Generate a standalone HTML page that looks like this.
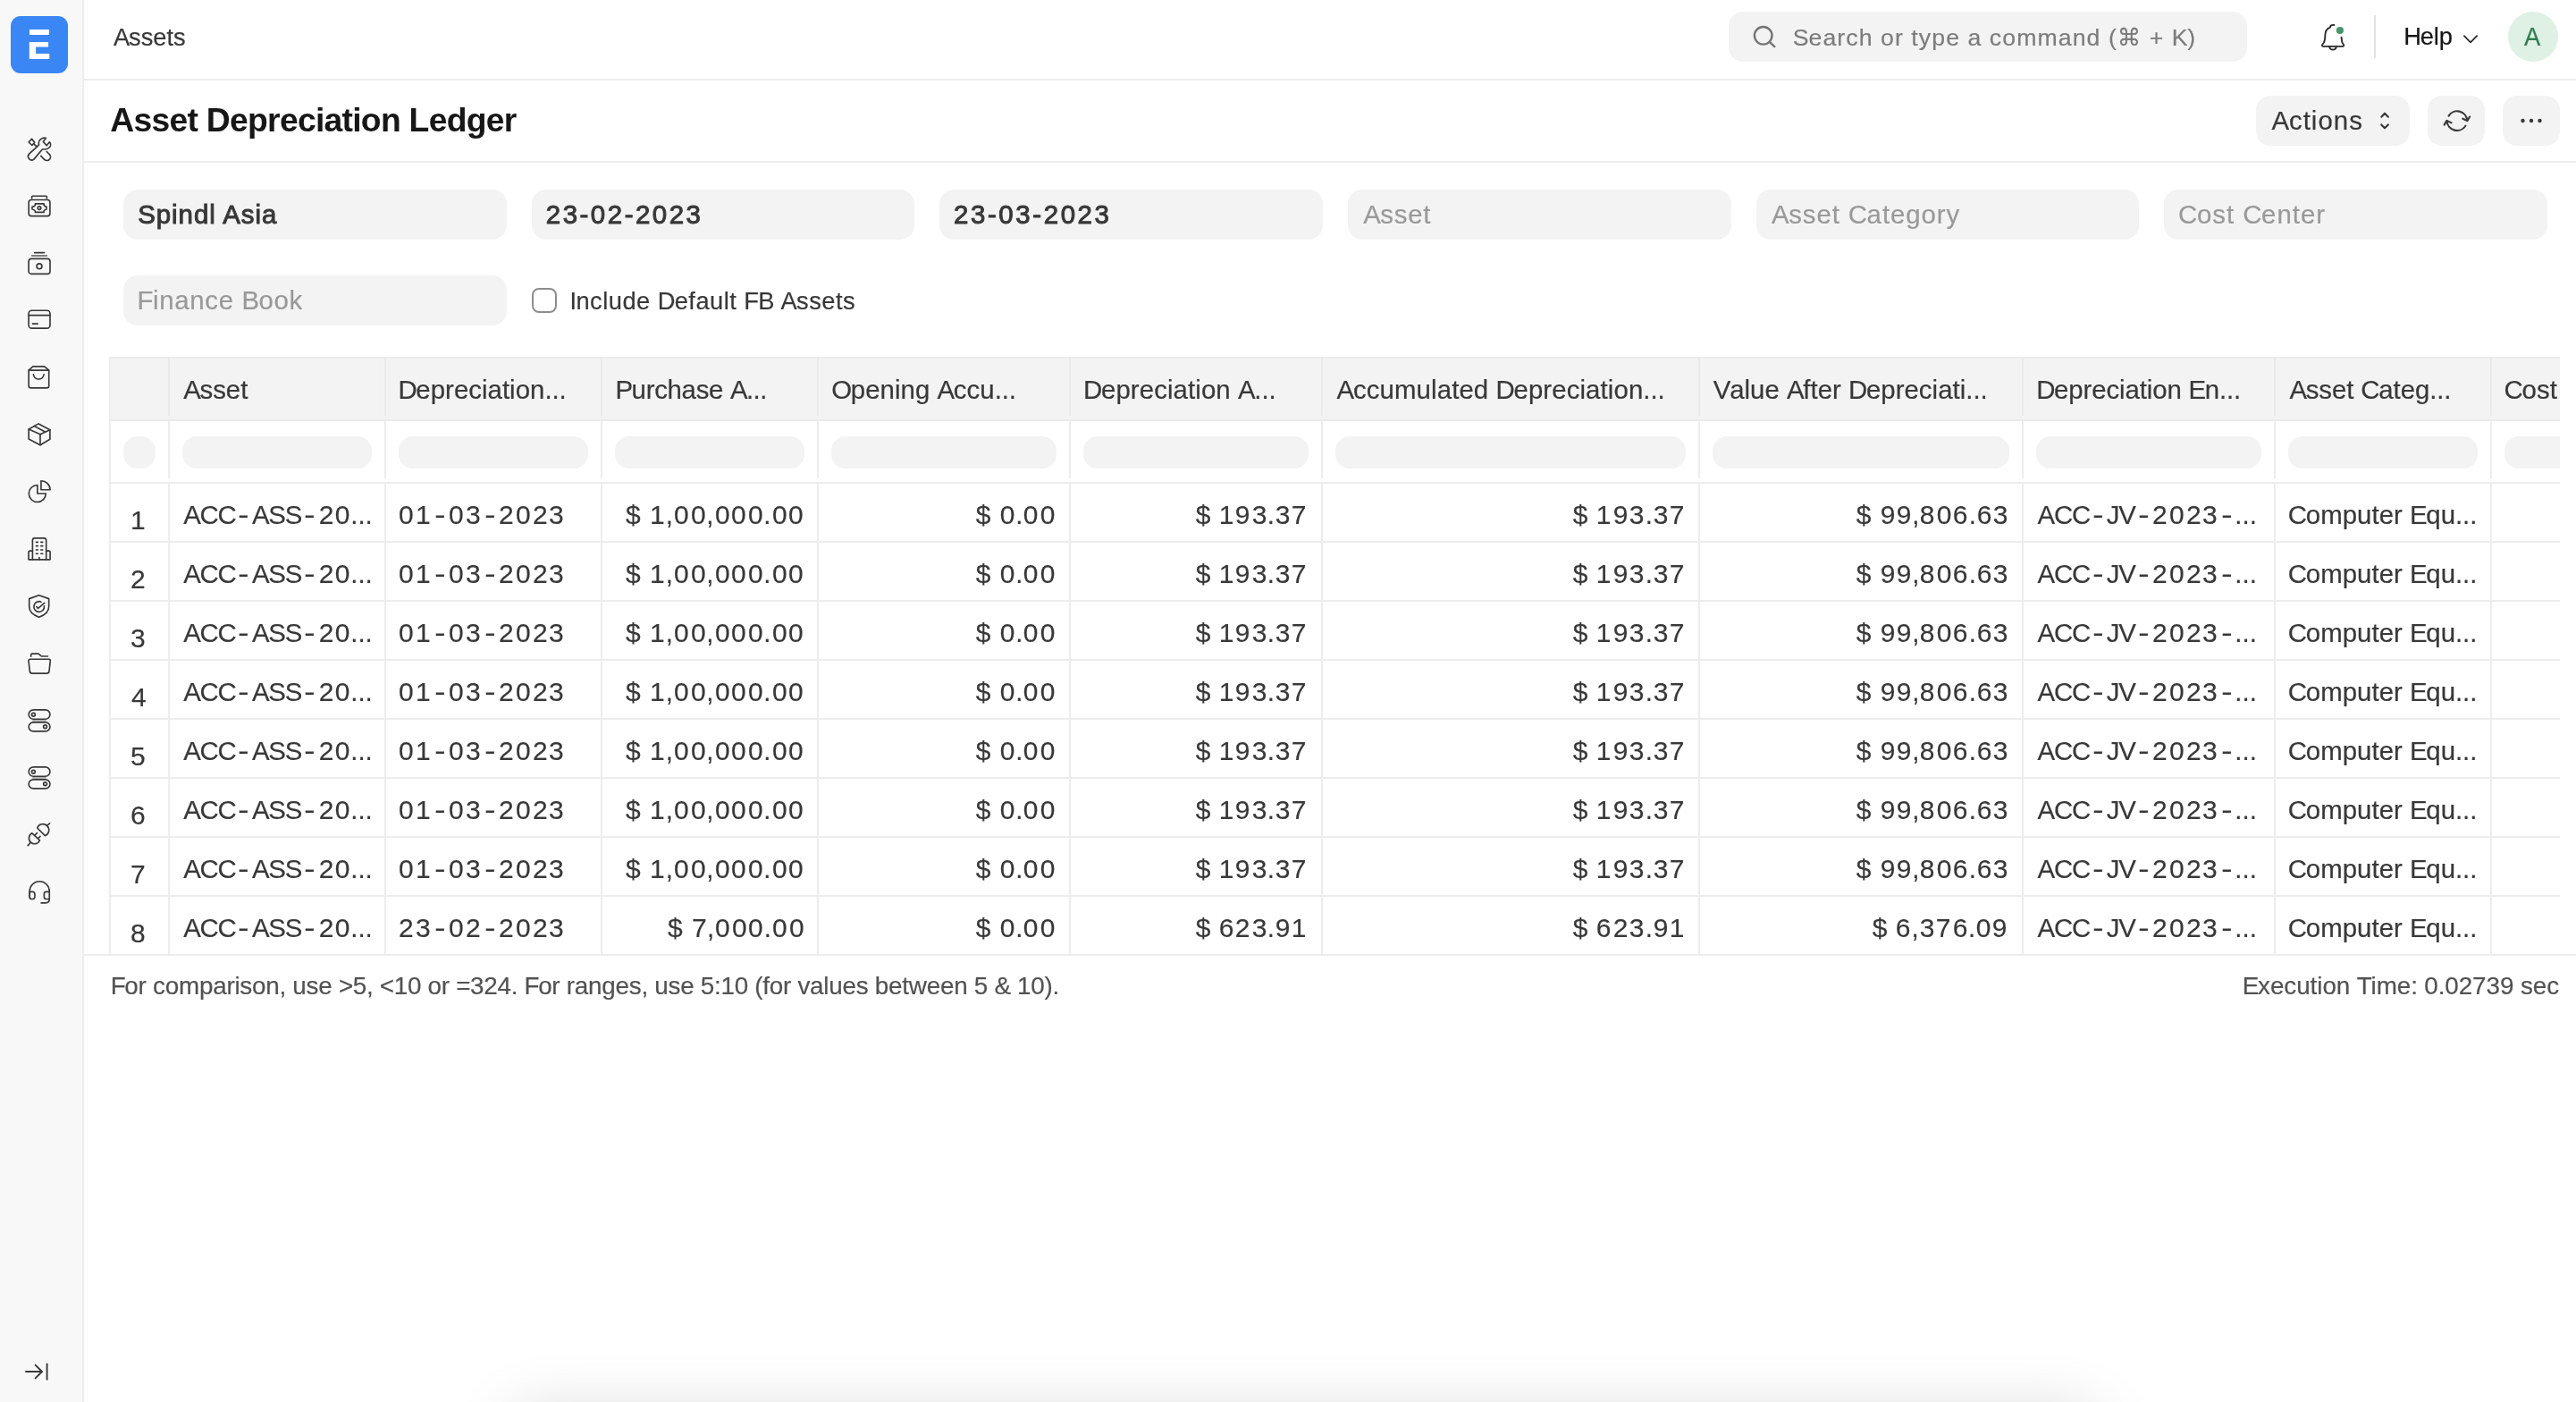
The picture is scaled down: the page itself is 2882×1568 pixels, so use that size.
<!DOCTYPE html>
<html lang="en"><head><meta charset="utf-8"><title>Asset Depreciation Ledger</title>
<style>
html,body{margin:0;padding:0;background:#fff;}
body{width:2882px;height:1568px;position:relative;overflow:hidden;font-family:"Liberation Sans", "DejaVu Sans", sans-serif;}
.b{position:absolute;}
.t{position:absolute;white-space:nowrap;line-height:1;font-kerning:normal;-webkit-text-stroke:0.2px currentColor;}
svg{position:absolute;overflow:visible;}
.t b{font-weight:inherit;display:inline-block;width:calc(.629em + var(--e));text-align:center;letter-spacing:0;transform:scaleX(1.02);}
.U{letter-spacing:calc(-.04em + var(--e));}
.l{letter-spacing:calc(.005em + var(--e));}
.p{letter-spacing:calc(.0em + var(--e));}
.s{letter-spacing:calc(.0em + var(--e));}
.t i{font-style:normal;display:inline-block;width:.634em;text-align:center;letter-spacing:0;transform:scaleX(1.25);}
</style></head><body>
<div class="b" style="left:0px;top:0px;width:92px;height:1568px;background:#f8f8f8;"></div>
<div class="b" style="left:92px;top:0px;width:2px;height:1568px;background:#ededed;"></div>
<div class="b" style="left:94px;top:88px;width:2788px;height:2px;background:#ededed;"></div>
<div class="b" style="left:94px;top:180px;width:2788px;height:2px;background:#ededed;"></div>
<div class="b" style="left:12px;top:18px;width:64px;height:64px;background:#3b86f5;border-radius:11px;"></div>
<div class="b" style="left:32.8px;top:33px;width:22.3px;height:6px;background:#fff;"></div>
<svg class="b" style="left:32px;top:46px" width="24" height="21" viewBox="32 46 24 21"><path d="M32.8 46.9H54.1V52.6H40.1V60.1H55.3V66.1H32.8Z" fill="#fff"/></svg>
<div class="b" style="left:1934px;top:13px;width:580px;height:56px;background:#f3f3f3;border-radius:16px;"></div>
<div class="b" style="left:2656px;top:17px;width:2px;height:48px;background:#e2e2e2;"></div>
<div class="b" style="left:2806px;top:13px;width:56px;height:56px;background:#dff0e4;border-radius:28px;"></div>
<div class="b" style="left:2524px;top:107px;width:172px;height:56px;background:#f3f3f3;border-radius:16px;"></div>
<div class="b" style="left:2716px;top:107px;width:64px;height:56px;background:#f3f3f3;border-radius:16px;"></div>
<div class="b" style="left:2800px;top:107px;width:64px;height:56px;background:#f3f3f3;border-radius:16px;"></div>
<div class="b" style="left:138.0px;top:212px;width:428.67px;height:56px;background:#f3f3f3;border-radius:16px;"></div>
<div class="b" style="left:594.67px;top:212px;width:428.67px;height:56px;background:#f3f3f3;border-radius:16px;"></div>
<div class="b" style="left:1051.33px;top:212px;width:428.67px;height:56px;background:#f3f3f3;border-radius:16px;"></div>
<div class="b" style="left:1508.0px;top:212px;width:428.67px;height:56px;background:#f3f3f3;border-radius:16px;"></div>
<div class="b" style="left:1964.67px;top:212px;width:428.67px;height:56px;background:#f3f3f3;border-radius:16px;"></div>
<div class="b" style="left:2421.34px;top:212px;width:428.67px;height:56px;background:#f3f3f3;border-radius:16px;"></div>
<div class="b" style="left:138px;top:308px;width:428.67px;height:56px;background:#f3f3f3;border-radius:16px;"></div>
<div class="b" style="left:595px;top:322px;width:28px;height:28px;background:#fff;border-radius:8px;box-sizing:border-box;border:2px solid #8d8d8d;"></div>
<div class="b" style="left:122px;top:399px;width:2742px;height:672px;overflow:hidden">
<div class="b" style="left:0px;top:0px;width:2760px;height:70px;background:#f3f3f3;"></div>
<div class="b" style="left:0px;top:70px;width:2760px;height:2px;background:#ebebeb;"></div>
<div class="b" style="left:0px;top:0px;width:2760px;height:2px;background:#ececec;"></div>
<div class="b" style="left:0px;top:0px;width:2px;height:670px;background:#ededed;"></div>
<div class="b" style="left:66px;top:0px;width:2px;height:66px;background:#eaeaea;"></div>
<div class="b" style="left:66px;top:72px;width:2px;height:64px;background:#ededed;"></div>
<div class="b" style="left:308px;top:0px;width:2px;height:66px;background:#eaeaea;"></div>
<div class="b" style="left:308px;top:72px;width:2px;height:64px;background:#ededed;"></div>
<div class="b" style="left:550px;top:0px;width:2px;height:66px;background:#eaeaea;"></div>
<div class="b" style="left:550px;top:72px;width:2px;height:64px;background:#ededed;"></div>
<div class="b" style="left:792px;top:0px;width:2px;height:66px;background:#eaeaea;"></div>
<div class="b" style="left:792px;top:72px;width:2px;height:64px;background:#ededed;"></div>
<div class="b" style="left:1074px;top:0px;width:2px;height:66px;background:#eaeaea;"></div>
<div class="b" style="left:1074px;top:72px;width:2px;height:64px;background:#ededed;"></div>
<div class="b" style="left:1356px;top:0px;width:2px;height:66px;background:#eaeaea;"></div>
<div class="b" style="left:1356px;top:72px;width:2px;height:64px;background:#ededed;"></div>
<div class="b" style="left:1778px;top:0px;width:2px;height:66px;background:#eaeaea;"></div>
<div class="b" style="left:1778px;top:72px;width:2px;height:64px;background:#ededed;"></div>
<div class="b" style="left:2140px;top:0px;width:2px;height:66px;background:#eaeaea;"></div>
<div class="b" style="left:2140px;top:72px;width:2px;height:64px;background:#ededed;"></div>
<div class="b" style="left:2422px;top:0px;width:2px;height:66px;background:#eaeaea;"></div>
<div class="b" style="left:2422px;top:72px;width:2px;height:64px;background:#ededed;"></div>
<div class="b" style="left:2664px;top:0px;width:2px;height:66px;background:#eaeaea;"></div>
<div class="b" style="left:2664px;top:72px;width:2px;height:64px;background:#ededed;"></div>
<div class="b" style="left:0px;top:140px;width:2760px;height:2px;background:#ededed;"></div>
<div class="b" style="left:16px;top:89px;width:36px;height:36px;background:#f3f3f3;border-radius:16px;"></div>
<div class="b" style="left:82px;top:89px;width:212px;height:36px;background:#f3f3f3;border-radius:16px;"></div>
<div class="b" style="left:324px;top:89px;width:212px;height:36px;background:#f3f3f3;border-radius:16px;"></div>
<div class="b" style="left:566px;top:89px;width:212px;height:36px;background:#f3f3f3;border-radius:16px;"></div>
<div class="b" style="left:808px;top:89px;width:252px;height:36px;background:#f3f3f3;border-radius:16px;"></div>
<div class="b" style="left:1090px;top:89px;width:252px;height:36px;background:#f3f3f3;border-radius:16px;"></div>
<div class="b" style="left:1372px;top:89px;width:392px;height:36px;background:#f3f3f3;border-radius:16px;"></div>
<div class="b" style="left:1794px;top:89px;width:332px;height:36px;background:#f3f3f3;border-radius:16px;"></div>
<div class="b" style="left:2156px;top:89px;width:252px;height:36px;background:#f3f3f3;border-radius:16px;"></div>
<div class="b" style="left:2438px;top:89px;width:212px;height:36px;background:#f3f3f3;border-radius:16px;"></div>
<div class="b" style="left:2680px;top:89px;width:212px;height:36px;background:#f3f3f3;border-radius:16px;"></div>
<div class="b" style="left:2px;top:206px;width:2760px;height:2px;background:#ededed;"></div>
<div class="b" style="left:66px;top:142px;width:2px;height:64px;background:#ededed;"></div>
<div class="b" style="left:308px;top:142px;width:2px;height:64px;background:#ededed;"></div>
<div class="b" style="left:550px;top:142px;width:2px;height:64px;background:#ededed;"></div>
<div class="b" style="left:792px;top:142px;width:2px;height:64px;background:#ededed;"></div>
<div class="b" style="left:1074px;top:142px;width:2px;height:64px;background:#ededed;"></div>
<div class="b" style="left:1356px;top:142px;width:2px;height:64px;background:#ededed;"></div>
<div class="b" style="left:1778px;top:142px;width:2px;height:64px;background:#ededed;"></div>
<div class="b" style="left:2140px;top:142px;width:2px;height:64px;background:#ededed;"></div>
<div class="b" style="left:2422px;top:142px;width:2px;height:64px;background:#ededed;"></div>
<div class="b" style="left:2664px;top:142px;width:2px;height:64px;background:#ededed;"></div>
<div class="b" style="left:2px;top:272px;width:2760px;height:2px;background:#ededed;"></div>
<div class="b" style="left:66px;top:208px;width:2px;height:64px;background:#ededed;"></div>
<div class="b" style="left:308px;top:208px;width:2px;height:64px;background:#ededed;"></div>
<div class="b" style="left:550px;top:208px;width:2px;height:64px;background:#ededed;"></div>
<div class="b" style="left:792px;top:208px;width:2px;height:64px;background:#ededed;"></div>
<div class="b" style="left:1074px;top:208px;width:2px;height:64px;background:#ededed;"></div>
<div class="b" style="left:1356px;top:208px;width:2px;height:64px;background:#ededed;"></div>
<div class="b" style="left:1778px;top:208px;width:2px;height:64px;background:#ededed;"></div>
<div class="b" style="left:2140px;top:208px;width:2px;height:64px;background:#ededed;"></div>
<div class="b" style="left:2422px;top:208px;width:2px;height:64px;background:#ededed;"></div>
<div class="b" style="left:2664px;top:208px;width:2px;height:64px;background:#ededed;"></div>
<div class="b" style="left:2px;top:338px;width:2760px;height:2px;background:#ededed;"></div>
<div class="b" style="left:66px;top:274px;width:2px;height:64px;background:#ededed;"></div>
<div class="b" style="left:308px;top:274px;width:2px;height:64px;background:#ededed;"></div>
<div class="b" style="left:550px;top:274px;width:2px;height:64px;background:#ededed;"></div>
<div class="b" style="left:792px;top:274px;width:2px;height:64px;background:#ededed;"></div>
<div class="b" style="left:1074px;top:274px;width:2px;height:64px;background:#ededed;"></div>
<div class="b" style="left:1356px;top:274px;width:2px;height:64px;background:#ededed;"></div>
<div class="b" style="left:1778px;top:274px;width:2px;height:64px;background:#ededed;"></div>
<div class="b" style="left:2140px;top:274px;width:2px;height:64px;background:#ededed;"></div>
<div class="b" style="left:2422px;top:274px;width:2px;height:64px;background:#ededed;"></div>
<div class="b" style="left:2664px;top:274px;width:2px;height:64px;background:#ededed;"></div>
<div class="b" style="left:2px;top:404px;width:2760px;height:2px;background:#ededed;"></div>
<div class="b" style="left:66px;top:340px;width:2px;height:64px;background:#ededed;"></div>
<div class="b" style="left:308px;top:340px;width:2px;height:64px;background:#ededed;"></div>
<div class="b" style="left:550px;top:340px;width:2px;height:64px;background:#ededed;"></div>
<div class="b" style="left:792px;top:340px;width:2px;height:64px;background:#ededed;"></div>
<div class="b" style="left:1074px;top:340px;width:2px;height:64px;background:#ededed;"></div>
<div class="b" style="left:1356px;top:340px;width:2px;height:64px;background:#ededed;"></div>
<div class="b" style="left:1778px;top:340px;width:2px;height:64px;background:#ededed;"></div>
<div class="b" style="left:2140px;top:340px;width:2px;height:64px;background:#ededed;"></div>
<div class="b" style="left:2422px;top:340px;width:2px;height:64px;background:#ededed;"></div>
<div class="b" style="left:2664px;top:340px;width:2px;height:64px;background:#ededed;"></div>
<div class="b" style="left:2px;top:470px;width:2760px;height:2px;background:#ededed;"></div>
<div class="b" style="left:66px;top:406px;width:2px;height:64px;background:#ededed;"></div>
<div class="b" style="left:308px;top:406px;width:2px;height:64px;background:#ededed;"></div>
<div class="b" style="left:550px;top:406px;width:2px;height:64px;background:#ededed;"></div>
<div class="b" style="left:792px;top:406px;width:2px;height:64px;background:#ededed;"></div>
<div class="b" style="left:1074px;top:406px;width:2px;height:64px;background:#ededed;"></div>
<div class="b" style="left:1356px;top:406px;width:2px;height:64px;background:#ededed;"></div>
<div class="b" style="left:1778px;top:406px;width:2px;height:64px;background:#ededed;"></div>
<div class="b" style="left:2140px;top:406px;width:2px;height:64px;background:#ededed;"></div>
<div class="b" style="left:2422px;top:406px;width:2px;height:64px;background:#ededed;"></div>
<div class="b" style="left:2664px;top:406px;width:2px;height:64px;background:#ededed;"></div>
<div class="b" style="left:2px;top:536px;width:2760px;height:2px;background:#ededed;"></div>
<div class="b" style="left:66px;top:472px;width:2px;height:64px;background:#ededed;"></div>
<div class="b" style="left:308px;top:472px;width:2px;height:64px;background:#ededed;"></div>
<div class="b" style="left:550px;top:472px;width:2px;height:64px;background:#ededed;"></div>
<div class="b" style="left:792px;top:472px;width:2px;height:64px;background:#ededed;"></div>
<div class="b" style="left:1074px;top:472px;width:2px;height:64px;background:#ededed;"></div>
<div class="b" style="left:1356px;top:472px;width:2px;height:64px;background:#ededed;"></div>
<div class="b" style="left:1778px;top:472px;width:2px;height:64px;background:#ededed;"></div>
<div class="b" style="left:2140px;top:472px;width:2px;height:64px;background:#ededed;"></div>
<div class="b" style="left:2422px;top:472px;width:2px;height:64px;background:#ededed;"></div>
<div class="b" style="left:2664px;top:472px;width:2px;height:64px;background:#ededed;"></div>
<div class="b" style="left:2px;top:602px;width:2760px;height:2px;background:#ededed;"></div>
<div class="b" style="left:66px;top:538px;width:2px;height:64px;background:#ededed;"></div>
<div class="b" style="left:308px;top:538px;width:2px;height:64px;background:#ededed;"></div>
<div class="b" style="left:550px;top:538px;width:2px;height:64px;background:#ededed;"></div>
<div class="b" style="left:792px;top:538px;width:2px;height:64px;background:#ededed;"></div>
<div class="b" style="left:1074px;top:538px;width:2px;height:64px;background:#ededed;"></div>
<div class="b" style="left:1356px;top:538px;width:2px;height:64px;background:#ededed;"></div>
<div class="b" style="left:1778px;top:538px;width:2px;height:64px;background:#ededed;"></div>
<div class="b" style="left:2140px;top:538px;width:2px;height:64px;background:#ededed;"></div>
<div class="b" style="left:2422px;top:538px;width:2px;height:64px;background:#ededed;"></div>
<div class="b" style="left:2664px;top:538px;width:2px;height:64px;background:#ededed;"></div>
<div class="b" style="left:2px;top:668px;width:2760px;height:2px;background:#ededed;"></div>
<div class="b" style="left:66px;top:604px;width:2px;height:64px;background:#ededed;"></div>
<div class="b" style="left:308px;top:604px;width:2px;height:64px;background:#ededed;"></div>
<div class="b" style="left:550px;top:604px;width:2px;height:64px;background:#ededed;"></div>
<div class="b" style="left:792px;top:604px;width:2px;height:64px;background:#ededed;"></div>
<div class="b" style="left:1074px;top:604px;width:2px;height:64px;background:#ededed;"></div>
<div class="b" style="left:1356px;top:604px;width:2px;height:64px;background:#ededed;"></div>
<div class="b" style="left:1778px;top:604px;width:2px;height:64px;background:#ededed;"></div>
<div class="b" style="left:2140px;top:604px;width:2px;height:64px;background:#ededed;"></div>
<div class="b" style="left:2422px;top:604px;width:2px;height:64px;background:#ededed;"></div>
<div class="b" style="left:2664px;top:604px;width:2px;height:64px;background:#ededed;"></div>
<span class="t" style="left:2749px;top:21.61px;font-size:29.4px;color:#383838">Center</span>
</div>
<div class="b" style="left:94px;top:1067px;width:2788px;height:2px;background:#ededed;"></div>
<svg style="left:28.4px;top:150.9px" width="32" height="32" viewBox="0 0 32 32" fill="none" stroke="#383838" stroke-width="1.65" stroke-linecap="round" stroke-linejoin="round"><path d="M23.4 3.6 L20.3 7.4 L24.2 11.8 L27.4 7.8 C29.2 9.8 28.8 12.4 27.4 13.8 C26 15.3 24.4 16 22.8 16 L19.4 16 L9.7 27.4 A4.1 4.1 0 0 1 4.6 21.1 L13.1 13.4 L15.6 10.9 C14.8 8.4 15.8 5.2 19.2 3.7 C20.6 3.1 22.2 3 23.4 3.6 Z"/><path d="M7.55 4.4 L4.1 8 L7.9 11.5 L10.7 8.2 Z"/><path d="M9.8 9.8 L13.2 13.2"/><path d="M24.2 18.5 L27.3 21.6 A4.03 4.03 0 0 1 21.6 27.3 L17.7 23.4"/></svg>
<svg style="left:28.0px;top:214.0px" width="32" height="32" viewBox="0 0 32 32" fill="none" stroke="#383838" stroke-width="1.65" stroke-linecap="round" stroke-linejoin="round"><path d="M7.6 7.9 V6.2 A1 1 0 0 1 8.6 5.2 H23.4 A1 1 0 0 1 24.4 6.2 V7.9"/><rect x="4.2" y="9.5" width="23.7" height="18.1" rx="2.8"/><path d="M11.4 13.9 H21.1 V15.5 Q21.3 16.5 24 17.4 V20 Q21.3 20.9 21.1 21.9 V23.4 H11.4 V21.9 Q11.2 20.9 8 20 V17.4 Q11.2 16.5 11.4 15.5 Z"/><circle cx="16" cy="18.6" r="1.8"/></svg>
<svg style="left:28.0px;top:278.0px" width="32" height="32" viewBox="0 0 32 32" fill="none" stroke="#383838" stroke-width="1.65" stroke-linecap="round" stroke-linejoin="round"><path d="M10.6 4.6H21.5"/><path d="M7.7 8H24.4" opacity=".85"/><rect x="4.1" y="11.4" width="23.9" height="17" rx="3"/><circle cx="16" cy="19.8" r="2.9"/></svg>
<svg style="left:28.0px;top:342.0px" width="32" height="32" viewBox="0 0 32 32" fill="none" stroke="#383838" stroke-width="1.65" stroke-linecap="round" stroke-linejoin="round"><rect x="4.1" y="5.25" width="23.9" height="19.85" rx="3.4"/><path d="M4.1 10.55H28"/><path d="M8.4 20.1H14.2"/></svg>
<svg style="left:28.0px;top:406.0px" width="32" height="32" viewBox="0 0 32 32" fill="none" stroke="#383838" stroke-width="1.65" stroke-linecap="round" stroke-linejoin="round"><path d="M4.15 8.2 L8.8 3.9 H21.7 L26.7 8.2 V25.4 A2.5 2.5 0 0 1 24.2 27.9 H6.65 A2.5 2.5 0 0 1 4.15 25.4 Z"/><path d="M4.15 8.1H26.7"/><path d="M9.4 12.9 A5.9 5.9 0 0 0 21.1 12.9"/></svg>
<svg style="left:28.0px;top:470.0px" width="32" height="32" viewBox="0 0 32 32" fill="none" stroke="#383838" stroke-width="1.65" stroke-linecap="round" stroke-linejoin="round"><path d="M15.1 3.9 L27.9 10.7 V21.2 L17 27.7 L4.15 20.9 V10 Z"/><path d="M4.15 10 L17 15.7 L27.9 10.7"/><path d="M17 15.7V27.7"/><path d="M10.4 6.6 L22.4 13.1"/></svg>
<svg style="left:28.0px;top:534.0px" width="32" height="32" viewBox="0 0 32 32" fill="none" stroke="#383838" stroke-width="1.65" stroke-linecap="round" stroke-linejoin="round"><path d="M13.85 8.5 A9.5 9.5 0 1 0 23.3 17.95 H13.85 Z"/><path d="M17.95 13.7 V3.8 A10 10 0 0 1 28.1 13.7 Z"/></svg>
<svg style="left:28.0px;top:598.0px" width="32" height="32" viewBox="0 0 32 32" fill="none" stroke="#383838" stroke-width="1.65" stroke-linecap="round" stroke-linejoin="round"><path d="M8.4 27.8 V6.2 A2.4 2.4 0 0 1 10.8 3.85 H21.3 A2.4 2.4 0 0 1 23.7 6.2 V27.8"/><path d="M8.4 18.1 H5.5 A1.5 1.5 0 0 0 4 19.6 V27.8 H28.1 V19.6 A1.5 1.5 0 0 0 26.6 18.1 H23.7"/><path d="M12.4 8.3h2M17.8 8.3h2M12.4 12.55h2M17.8 12.55h2M12.4 16.95h2M17.8 16.95h2M12.4 21.25h2M17.8 21.25h2"/><path d="M16 25.6V27.8"/></svg>
<svg style="left:28.0px;top:662.0px" width="32" height="32" viewBox="0 0 32 32" fill="none" stroke="#383838" stroke-width="1.65" stroke-linecap="round" stroke-linejoin="round"><path d="M15.6 3.7 L26.65 7.6 V16.6 C26.65 21.8 22.4 26 15.7 28.2 C9 26 4.7 21.8 4.7 16.6 V7.6 Z"/><path d="M18 11.2 A5.8 5.8 0 1 0 21.45 15.8"/><path d="M12.8 16.5 L14.6 18.4 L21.7 12.3"/></svg>
<svg style="left:28.0px;top:726.0px" width="32" height="32" viewBox="0 0 32 32" fill="none" stroke="#383838" stroke-width="1.65" stroke-linecap="round" stroke-linejoin="round"><path d="M6.7 8.2 V6.1 A1 1 0 0 1 7.7 5.15 H14.6 C16.6 5.15 16.6 8 18.8 8 H25.4"/><path d="M5.6 11.25 H26.8 A1.6 1.6 0 0 1 28.3 13 L27 24.6 A2.8 2.8 0 0 1 24.3 27.1 H8 A2.8 2.8 0 0 1 5.3 24.6 L4 13 A1.6 1.6 0 0 1 5.6 11.25 Z"/></svg>
<svg style="left:28.0px;top:790.0px" width="32" height="32" viewBox="0 0 32 32" fill="none" stroke="#383838" stroke-width="1.65" stroke-linecap="round" stroke-linejoin="round"><rect x="8.2" y="15" width="15.6" height="2.2" fill="#b4b4b4" stroke="none"/><rect x="4.15" y="3.85" width="23.8" height="10.4" rx="5.2"/><circle cx="9.4" cy="9.25" r="1.9"/><rect x="4.15" y="17.9" width="23.8" height="10" rx="5"/><circle cx="22.55" cy="22.7" r="1.9"/></svg>
<svg style="left:28.0px;top:854.0px" width="32" height="32" viewBox="0 0 32 32" fill="none" stroke="#383838" stroke-width="1.65" stroke-linecap="round" stroke-linejoin="round"><rect x="8.2" y="15" width="15.6" height="2.2" fill="#b4b4b4" stroke="none"/><rect x="4.15" y="3.85" width="23.8" height="10.4" rx="5.2"/><circle cx="9.4" cy="9.25" r="1.9"/><rect x="4.15" y="17.9" width="23.8" height="10" rx="5"/><circle cx="22.55" cy="22.7" r="1.9"/></svg>
<svg style="left:28.0px;top:918.0px" width="32" height="32" viewBox="0 0 32 32" fill="none" stroke="#383838" stroke-width="1.65" stroke-linecap="round" stroke-linejoin="round"><path d="M13.7 8 A6.74 6.74 0 1 1 22.4 16.7 Z"/><path d="M24.5 5.4 L27.6 2.8"/><path d="M7.85 13.85 A6.3 6.3 0 1 0 16.55 21.8 Z"/><path d="M6.2 24.2 L3.2 27.6"/><path d="M11.15 15.95 L13.4 13.6"/><path d="M14.7 19.5 L16.95 17.3"/></svg>
<svg style="left:28.0px;top:982.0px" width="32" height="32" viewBox="0 0 32 32" fill="none" stroke="#383838" stroke-width="1.65" stroke-linecap="round" stroke-linejoin="round"><path d="M5.15 21.4 V14.8 A11.05 11.05 0 0 1 27.25 14.8 V23.6 C27.25 26.4 25.6 27.8 23 27.8 H18"/><path d="M5.15 15.4 H8.6 A2.3 2.3 0 0 1 10.95 17.7 V21.2 A2.3 2.3 0 0 1 8.6 23.5 H7.4 A2.3 2.3 0 0 1 5.15 21.2 Z"/><path d="M27.25 15.4 H23.7 A2.3 2.3 0 0 0 21.4 17.7 V21.2 A2.3 2.3 0 0 0 23.7 23.5 H27.25"/></svg>
<svg style="left:24.5px;top:1518.0px" width="32" height="32" viewBox="0 0 32 32" fill="none" stroke="#383838" stroke-width="1.9" stroke-linecap="round" stroke-linejoin="round"><path d="M4 16 H21.6"/><path d="M14.6 8.6 L22 16 L14.6 23.4"/><path d="M27.6 7.4 V24.8"/></svg>
<svg style="left:1958.0px;top:25.0px" width="32" height="32" viewBox="0 0 32 32" fill="none" stroke="#757575" stroke-width="2.4" stroke-linecap="round" stroke-linejoin="round"><circle cx="14.7" cy="14.8" r="9.8"/><path d="M21.8 21.9 L27.3 27.2"/></svg>
<svg style="left:2594.0px;top:26.0px" width="32" height="32" viewBox="0 0 32 32" fill="none" stroke="#2b2b2b" stroke-width="1.9" stroke-linecap="round" stroke-linejoin="round"><path d="M17.4 2 C14.6 1.4 13 2.8 12.9 4.6 C9.3 6 7.3 9.6 7.3 14 C7.3 18.5 6.6 21.6 4.6 23.4 C3.4 24.5 4 25.9 5.4 25.9 H26.8 C28.2 25.9 28.8 24.5 27.6 23.4 C26.3 22.2 25.7 19.6 25.6 15.6"/><path d="M12.2 26.6 A3.9 3.9 0 0 0 19.8 26.6"/><circle cx="23.9" cy="8" r="4.1" fill="#46966a" stroke="none"/></svg>
<svg style="left:2748.2px;top:27.700000000000003px" width="32" height="32" viewBox="0 0 32 32" fill="none" stroke="#2b2b2b" stroke-width="1.8" stroke-linecap="round" stroke-linejoin="round"><path d="M8.9 12.2 L16 19.4 L23.1 12.2"/></svg>
<svg style="left:2652.4px;top:118.80000000000001px" width="32" height="32" viewBox="0 0 32 32" fill="none" stroke="#383838" stroke-width="2.1" stroke-linecap="round" stroke-linejoin="round"><path d="M12.3 11.7 L16 7.7 L19.9 11.7"/><path d="M12.2 20.4 L16 24.3 L19.9 20.4"/></svg>
<svg style="left:2732.5px;top:118.80000000000001px" width="32" height="32" viewBox="0 0 32 32" fill="none" stroke="#383838" stroke-width="2.1" stroke-linecap="round" stroke-linejoin="round"><path d="M6.5 10.6 A11.3 11.3 0 0 1 27.3 15.4"/><path d="M22.3 13.7 L27.4 16.1 L30.1 11.5"/><path d="M25.4 21.7 A11.3 11.3 0 0 1 4.6 16.6"/><path d="M1.6 20.6 L4.4 15.9 L9.6 18.4"/></svg>
<svg style="left:2816px;top:130px" width="32" height="10" viewBox="0 0 32 10"><circle cx="6.5" cy="5" r="2.2" fill="#383838"/><circle cx="16" cy="5" r="2.2" fill="#383838"/><circle cx="25.5" cy="5" r="2.2" fill="#383838"/></svg>
<div id="txt" style="position:absolute;left:0;top:0;width:2882px;height:1568px;will-change:transform;">
<span class="t" id="nav_assets" style="left:127.00px;top:28.39px;font-size:27.3px;color:#383838;--e:-0.140px;"><span class="U">A</span><span class="l">ssets</span></span>
<span class="t" id="nav_search" style="left:2005.80px;top:29.12px;font-size:26.67px;color:#7c7c7c;--e:0.965px;"><span class="U">S</span><span class="l">earch</span><span class="s"> </span><span class="l">or</span><span class="s"> </span><span class="l">type</span><span class="s"> </span><span class="l">a</span><span class="s"> </span><span class="l">command</span><span class="s"> </span><span class="p">(⌘</span><span class="s"> </span><span class="p">+</span><span class="s"> </span><span class="U">K</span><span class="p">)</span></span>
<span class="t" id="nav_help" style="left:2689.20px;top:26.99px;font-size:27.3px;color:#171717;--e:-0.167px;"><span class="U">H</span><span class="l">elp</span></span>
<span class="t U" id="nav_avatar" style="left:2824.40px;top:25.61px;font-size:29.4px;color:#2f7d50;transform:scaleX(.93);transform-origin:0 0;--e:0.000px;">A</span>
<span class="t" id="title" style="left:123.30px;top:116.25px;font-size:37.27px;color:#171717;font-weight:700;-webkit-text-stroke:0;letter-spacing:-0.717px;">Asset Depreciation Ledger</span>
<span class="t" id="actions" style="left:2541.60px;top:120.21px;font-size:29.4px;color:#383838;--e:0.883px;"><span class="U">A</span><span class="l">ctions</span></span>
<span class="t" id="f_company" style="left:154.20px;top:224.91px;font-size:29.4px;color:#383838;-webkit-text-stroke:1.0px currentColor;letter-spacing:0.970px;">Spindl Asia</span>
<span class="t" id="f_from" style="left:610.80px;top:224.91px;font-size:29.4px;color:#383838;-webkit-text-stroke:1.0px currentColor;letter-spacing:2.533px;">23-02-2023</span>
<span class="t" id="f_to" style="left:1067.00px;top:224.91px;font-size:29.4px;color:#383838;-webkit-text-stroke:1.0px currentColor;letter-spacing:2.622px;">23-03-2023</span>
<span class="t" id="f_asset" style="left:1525.20px;top:224.91px;font-size:29.4px;color:#999999;--e:0.625px;"><span class="U">A</span><span class="l">sset</span></span>
<span class="t" id="f_cat" style="left:1982.00px;top:224.91px;font-size:29.4px;color:#999999;--e:0.777px;"><span class="U">A</span><span class="l">sset</span><span class="s"> </span><span class="U">C</span><span class="l">ategory</span></span>
<span class="t" id="f_cc" style="left:2437.00px;top:224.91px;font-size:29.4px;color:#999999;--e:0.860px;"><span class="U">C</span><span class="l">ost</span><span class="s"> </span><span class="U">C</span><span class="l">enter</span></span>
<span class="t" id="f_fb" style="left:153.60px;top:320.61px;font-size:29.4px;color:#999999;--e:0.545px;"><span class="U">F</span><span class="l">inance</span><span class="s"> </span><span class="U">B</span><span class="l">ook</span></span>
<span class="t" id="f_chk" style="left:637.60px;top:322.59px;font-size:27.3px;color:#383838;--e:0.342px;"><span class="U">I</span><span class="l">nclude</span><span class="s"> </span><span class="U">D</span><span class="l">efault</span><span class="s"> </span><span class="U">FB</span><span class="s"> </span><span class="U">A</span><span class="l">ssets</span></span>
<span class="t" id="h_asset" style="left:205.20px;top:420.61px;font-size:29.4px;color:#383838;--e:-0.150px;"><span class="U">A</span><span class="l">sset</span></span>
<span class="t" id="h_depdate" style="left:445.40px;top:420.61px;font-size:29.4px;color:#383838;--e:-0.121px;"><span class="U">D</span><span class="l">epreciation</span><span class="p">...</span></span>
<span class="t" id="h_purch" style="left:688.60px;top:420.61px;font-size:29.4px;color:#383838;--e:-0.433px;"><span class="U">P</span><span class="l">urchase</span><span class="s"> </span><span class="U">A</span><span class="p">...</span></span>
<span class="t" id="h_open" style="left:930.20px;top:420.61px;font-size:29.4px;color:#383838;--e:-0.100px;"><span class="U">O</span><span class="l">pening</span><span class="s"> </span><span class="U">A</span><span class="l">ccu</span><span class="p">...</span></span>
<span class="t" id="h_depamt" style="left:1212.00px;top:420.61px;font-size:29.4px;color:#383838;--e:-0.056px;"><span class="U">D</span><span class="l">epreciation</span><span class="s"> </span><span class="U">A</span><span class="p">...</span></span>
<span class="t" id="h_accum" style="left:1495.60px;top:420.61px;font-size:29.4px;color:#383838;--e:-0.046px;"><span class="U">A</span><span class="l">ccumulated</span><span class="s"> </span><span class="U">D</span><span class="l">epreciation</span><span class="p">...</span></span>
<span class="t" id="h_value" style="left:1916.80px;top:420.61px;font-size:29.4px;color:#383838;--e:-0.108px;"><span class="U">V</span><span class="l">alue</span><span class="s"> </span><span class="U">A</span><span class="l">fter</span><span class="s"> </span><span class="U">D</span><span class="l">epreciati</span><span class="p">...</span></span>
<span class="t" id="h_entry" style="left:2278.20px;top:420.61px;font-size:29.4px;color:#383838;--e:-0.247px;"><span class="U">D</span><span class="l">epreciation</span><span class="s"> </span><span class="U">E</span><span class="l">n</span><span class="p">...</span></span>
<span class="t" id="h_cat" style="left:2561.40px;top:420.61px;font-size:29.4px;color:#383838;--e:-0.192px;"><span class="U">A</span><span class="l">sset</span><span class="s"> </span><span class="U">C</span><span class="l">ateg</span><span class="p">...</span></span>
<span class="t" id="h_cost" style="left:2801.40px;top:420.61px;font-size:29.4px;color:#383838;--e:-0.033px;"><span class="U">C</span><span class="l">ost</span></span>
<span class="t" id="r1_idx" style="left:144.90px;top:566.61px;font-size:29.4px;color:#383838;--e:0.000px;"><b>1</b></span>
<span class="t" id="r1_asset" style="left:205.20px;top:560.91px;font-size:29.4px;color:#383838;--e:-0.110px;"><span class="U">ACC</span><i>-</i><span class="U">ASS</span><i>-</i><b>2</b><b>0</b><span class="p">...</span></span>
<span class="t" id="r1_date" style="left:445.20px;top:560.91px;font-size:29.4px;color:#383838;--e:0.200px;"><b>0</b><b>1</b><i>-</i><b>0</b><b>3</b><i>-</i><b>2</b><b>0</b><b>2</b><b>3</b></span>
<span class="t" id="r1_purch" style="left:699.40px;top:560.91px;font-size:29.4px;color:#383838;--e:0.092px;"><b>$</b><span class="s"> </span><b>1</b><span class="p">,</span><b>0</b><b>0</b><span class="p">,</span><b>0</b><b>0</b><b>0</b><span class="p">.</span><b>0</b><b>0</b></span>
<span class="t" id="r1_open" style="left:1091.40px;top:560.91px;font-size:29.4px;color:#383838;--e:-0.060px;"><b>$</b><span class="s"> </span><b>0</b><span class="p">.</span><b>0</b><b>0</b></span>
<span class="t" id="r1_dep" style="left:1336.80px;top:560.91px;font-size:29.4px;color:#383838;--e:-0.214px;"><b>$</b><span class="s"> </span><b>1</b><b>9</b><b>3</b><span class="p">.</span><b>3</b><b>7</b></span>
<span class="t" id="r1_acc" style="left:1758.80px;top:560.91px;font-size:29.4px;color:#383838;--e:-0.043px;"><b>$</b><span class="s"> </span><b>1</b><b>9</b><b>3</b><span class="p">.</span><b>3</b><b>7</b></span>
<span class="t" id="r1_val" style="left:2076.00px;top:560.91px;font-size:29.4px;color:#383838;--e:-0.080px;"><b>$</b><span class="s"> </span><b>9</b><b>9</b><span class="p">,</span><b>8</b><b>0</b><b>6</b><span class="p">.</span><b>6</b><b>3</b></span>
<span class="t" id="r1_jv" style="left:2279.40px;top:560.91px;font-size:29.4px;color:#383838;--e:0.073px;"><span class="U">ACC</span><i>-</i><span class="U">JV</span><i>-</i><b>2</b><b>0</b><b>2</b><b>3</b><i>-</i><span class="p">...</span></span>
<span class="t" id="r1_cat" style="left:2559.80px;top:560.91px;font-size:29.4px;color:#383838;--e:-0.107px;"><span class="U">C</span><span class="l">omputer</span><span class="s"> </span><span class="U">E</span><span class="l">qu</span><span class="p">...</span></span>
<span class="t" id="r2_idx" style="left:145.40px;top:632.61px;font-size:29.4px;color:#383838;--e:0.000px;"><b>2</b></span>
<span class="t" id="r2_asset" style="left:205.20px;top:626.91px;font-size:29.4px;color:#383838;--e:-0.110px;"><span class="U">ACC</span><i>-</i><span class="U">ASS</span><i>-</i><b>2</b><b>0</b><span class="p">...</span></span>
<span class="t" id="r2_date" style="left:445.20px;top:626.91px;font-size:29.4px;color:#383838;--e:0.200px;"><b>0</b><b>1</b><i>-</i><b>0</b><b>3</b><i>-</i><b>2</b><b>0</b><b>2</b><b>3</b></span>
<span class="t" id="r2_purch" style="left:699.40px;top:626.91px;font-size:29.4px;color:#383838;--e:0.092px;"><b>$</b><span class="s"> </span><b>1</b><span class="p">,</span><b>0</b><b>0</b><span class="p">,</span><b>0</b><b>0</b><b>0</b><span class="p">.</span><b>0</b><b>0</b></span>
<span class="t" id="r2_open" style="left:1091.40px;top:626.91px;font-size:29.4px;color:#383838;--e:-0.060px;"><b>$</b><span class="s"> </span><b>0</b><span class="p">.</span><b>0</b><b>0</b></span>
<span class="t" id="r2_dep" style="left:1336.80px;top:626.91px;font-size:29.4px;color:#383838;--e:-0.214px;"><b>$</b><span class="s"> </span><b>1</b><b>9</b><b>3</b><span class="p">.</span><b>3</b><b>7</b></span>
<span class="t" id="r2_acc" style="left:1758.80px;top:626.91px;font-size:29.4px;color:#383838;--e:-0.043px;"><b>$</b><span class="s"> </span><b>1</b><b>9</b><b>3</b><span class="p">.</span><b>3</b><b>7</b></span>
<span class="t" id="r2_val" style="left:2076.00px;top:626.91px;font-size:29.4px;color:#383838;--e:-0.080px;"><b>$</b><span class="s"> </span><b>9</b><b>9</b><span class="p">,</span><b>8</b><b>0</b><b>6</b><span class="p">.</span><b>6</b><b>3</b></span>
<span class="t" id="r2_jv" style="left:2279.40px;top:626.91px;font-size:29.4px;color:#383838;--e:0.073px;"><span class="U">ACC</span><i>-</i><span class="U">JV</span><i>-</i><b>2</b><b>0</b><b>2</b><b>3</b><i>-</i><span class="p">...</span></span>
<span class="t" id="r2_cat" style="left:2559.80px;top:626.91px;font-size:29.4px;color:#383838;--e:-0.107px;"><span class="U">C</span><span class="l">omputer</span><span class="s"> </span><span class="U">E</span><span class="l">qu</span><span class="p">...</span></span>
<span class="t" id="r3_idx" style="left:145.40px;top:698.61px;font-size:29.4px;color:#383838;--e:0.000px;"><b>3</b></span>
<span class="t" id="r3_asset" style="left:205.20px;top:692.91px;font-size:29.4px;color:#383838;--e:-0.110px;"><span class="U">ACC</span><i>-</i><span class="U">ASS</span><i>-</i><b>2</b><b>0</b><span class="p">...</span></span>
<span class="t" id="r3_date" style="left:445.20px;top:692.91px;font-size:29.4px;color:#383838;--e:0.200px;"><b>0</b><b>1</b><i>-</i><b>0</b><b>3</b><i>-</i><b>2</b><b>0</b><b>2</b><b>3</b></span>
<span class="t" id="r3_purch" style="left:699.40px;top:692.91px;font-size:29.4px;color:#383838;--e:0.092px;"><b>$</b><span class="s"> </span><b>1</b><span class="p">,</span><b>0</b><b>0</b><span class="p">,</span><b>0</b><b>0</b><b>0</b><span class="p">.</span><b>0</b><b>0</b></span>
<span class="t" id="r3_open" style="left:1091.40px;top:692.91px;font-size:29.4px;color:#383838;--e:-0.060px;"><b>$</b><span class="s"> </span><b>0</b><span class="p">.</span><b>0</b><b>0</b></span>
<span class="t" id="r3_dep" style="left:1336.80px;top:692.91px;font-size:29.4px;color:#383838;--e:-0.214px;"><b>$</b><span class="s"> </span><b>1</b><b>9</b><b>3</b><span class="p">.</span><b>3</b><b>7</b></span>
<span class="t" id="r3_acc" style="left:1758.80px;top:692.91px;font-size:29.4px;color:#383838;--e:-0.043px;"><b>$</b><span class="s"> </span><b>1</b><b>9</b><b>3</b><span class="p">.</span><b>3</b><b>7</b></span>
<span class="t" id="r3_val" style="left:2076.00px;top:692.91px;font-size:29.4px;color:#383838;--e:-0.080px;"><b>$</b><span class="s"> </span><b>9</b><b>9</b><span class="p">,</span><b>8</b><b>0</b><b>6</b><span class="p">.</span><b>6</b><b>3</b></span>
<span class="t" id="r3_jv" style="left:2279.40px;top:692.91px;font-size:29.4px;color:#383838;--e:0.073px;"><span class="U">ACC</span><i>-</i><span class="U">JV</span><i>-</i><b>2</b><b>0</b><b>2</b><b>3</b><i>-</i><span class="p">...</span></span>
<span class="t" id="r3_cat" style="left:2559.80px;top:692.91px;font-size:29.4px;color:#383838;--e:-0.107px;"><span class="U">C</span><span class="l">omputer</span><span class="s"> </span><span class="U">E</span><span class="l">qu</span><span class="p">...</span></span>
<span class="t" id="r4_idx" style="left:145.90px;top:764.61px;font-size:29.4px;color:#383838;--e:0.000px;"><b>4</b></span>
<span class="t" id="r4_asset" style="left:205.20px;top:758.91px;font-size:29.4px;color:#383838;--e:-0.110px;"><span class="U">ACC</span><i>-</i><span class="U">ASS</span><i>-</i><b>2</b><b>0</b><span class="p">...</span></span>
<span class="t" id="r4_date" style="left:445.20px;top:758.91px;font-size:29.4px;color:#383838;--e:0.200px;"><b>0</b><b>1</b><i>-</i><b>0</b><b>3</b><i>-</i><b>2</b><b>0</b><b>2</b><b>3</b></span>
<span class="t" id="r4_purch" style="left:699.40px;top:758.91px;font-size:29.4px;color:#383838;--e:0.092px;"><b>$</b><span class="s"> </span><b>1</b><span class="p">,</span><b>0</b><b>0</b><span class="p">,</span><b>0</b><b>0</b><b>0</b><span class="p">.</span><b>0</b><b>0</b></span>
<span class="t" id="r4_open" style="left:1091.40px;top:758.91px;font-size:29.4px;color:#383838;--e:-0.060px;"><b>$</b><span class="s"> </span><b>0</b><span class="p">.</span><b>0</b><b>0</b></span>
<span class="t" id="r4_dep" style="left:1336.80px;top:758.91px;font-size:29.4px;color:#383838;--e:-0.214px;"><b>$</b><span class="s"> </span><b>1</b><b>9</b><b>3</b><span class="p">.</span><b>3</b><b>7</b></span>
<span class="t" id="r4_acc" style="left:1758.80px;top:758.91px;font-size:29.4px;color:#383838;--e:-0.043px;"><b>$</b><span class="s"> </span><b>1</b><b>9</b><b>3</b><span class="p">.</span><b>3</b><b>7</b></span>
<span class="t" id="r4_val" style="left:2076.00px;top:758.91px;font-size:29.4px;color:#383838;--e:-0.080px;"><b>$</b><span class="s"> </span><b>9</b><b>9</b><span class="p">,</span><b>8</b><b>0</b><b>6</b><span class="p">.</span><b>6</b><b>3</b></span>
<span class="t" id="r4_jv" style="left:2279.40px;top:758.91px;font-size:29.4px;color:#383838;--e:0.073px;"><span class="U">ACC</span><i>-</i><span class="U">JV</span><i>-</i><b>2</b><b>0</b><b>2</b><b>3</b><i>-</i><span class="p">...</span></span>
<span class="t" id="r4_cat" style="left:2559.80px;top:758.91px;font-size:29.4px;color:#383838;--e:-0.107px;"><span class="U">C</span><span class="l">omputer</span><span class="s"> </span><span class="U">E</span><span class="l">qu</span><span class="p">...</span></span>
<span class="t" id="r5_idx" style="left:145.40px;top:830.61px;font-size:29.4px;color:#383838;--e:0.000px;"><b>5</b></span>
<span class="t" id="r5_asset" style="left:205.20px;top:824.91px;font-size:29.4px;color:#383838;--e:-0.110px;"><span class="U">ACC</span><i>-</i><span class="U">ASS</span><i>-</i><b>2</b><b>0</b><span class="p">...</span></span>
<span class="t" id="r5_date" style="left:445.20px;top:824.91px;font-size:29.4px;color:#383838;--e:0.200px;"><b>0</b><b>1</b><i>-</i><b>0</b><b>3</b><i>-</i><b>2</b><b>0</b><b>2</b><b>3</b></span>
<span class="t" id="r5_purch" style="left:699.40px;top:824.91px;font-size:29.4px;color:#383838;--e:0.092px;"><b>$</b><span class="s"> </span><b>1</b><span class="p">,</span><b>0</b><b>0</b><span class="p">,</span><b>0</b><b>0</b><b>0</b><span class="p">.</span><b>0</b><b>0</b></span>
<span class="t" id="r5_open" style="left:1091.40px;top:824.91px;font-size:29.4px;color:#383838;--e:-0.060px;"><b>$</b><span class="s"> </span><b>0</b><span class="p">.</span><b>0</b><b>0</b></span>
<span class="t" id="r5_dep" style="left:1336.80px;top:824.91px;font-size:29.4px;color:#383838;--e:-0.214px;"><b>$</b><span class="s"> </span><b>1</b><b>9</b><b>3</b><span class="p">.</span><b>3</b><b>7</b></span>
<span class="t" id="r5_acc" style="left:1758.80px;top:824.91px;font-size:29.4px;color:#383838;--e:-0.043px;"><b>$</b><span class="s"> </span><b>1</b><b>9</b><b>3</b><span class="p">.</span><b>3</b><b>7</b></span>
<span class="t" id="r5_val" style="left:2076.00px;top:824.91px;font-size:29.4px;color:#383838;--e:-0.080px;"><b>$</b><span class="s"> </span><b>9</b><b>9</b><span class="p">,</span><b>8</b><b>0</b><b>6</b><span class="p">.</span><b>6</b><b>3</b></span>
<span class="t" id="r5_jv" style="left:2279.40px;top:824.91px;font-size:29.4px;color:#383838;--e:0.073px;"><span class="U">ACC</span><i>-</i><span class="U">JV</span><i>-</i><b>2</b><b>0</b><b>2</b><b>3</b><i>-</i><span class="p">...</span></span>
<span class="t" id="r5_cat" style="left:2559.80px;top:824.91px;font-size:29.4px;color:#383838;--e:-0.107px;"><span class="U">C</span><span class="l">omputer</span><span class="s"> </span><span class="U">E</span><span class="l">qu</span><span class="p">...</span></span>
<span class="t" id="r6_idx" style="left:145.40px;top:896.61px;font-size:29.4px;color:#383838;--e:0.000px;"><b>6</b></span>
<span class="t" id="r6_asset" style="left:205.20px;top:890.91px;font-size:29.4px;color:#383838;--e:-0.110px;"><span class="U">ACC</span><i>-</i><span class="U">ASS</span><i>-</i><b>2</b><b>0</b><span class="p">...</span></span>
<span class="t" id="r6_date" style="left:445.20px;top:890.91px;font-size:29.4px;color:#383838;--e:0.200px;"><b>0</b><b>1</b><i>-</i><b>0</b><b>3</b><i>-</i><b>2</b><b>0</b><b>2</b><b>3</b></span>
<span class="t" id="r6_purch" style="left:699.40px;top:890.91px;font-size:29.4px;color:#383838;--e:0.092px;"><b>$</b><span class="s"> </span><b>1</b><span class="p">,</span><b>0</b><b>0</b><span class="p">,</span><b>0</b><b>0</b><b>0</b><span class="p">.</span><b>0</b><b>0</b></span>
<span class="t" id="r6_open" style="left:1091.40px;top:890.91px;font-size:29.4px;color:#383838;--e:-0.060px;"><b>$</b><span class="s"> </span><b>0</b><span class="p">.</span><b>0</b><b>0</b></span>
<span class="t" id="r6_dep" style="left:1336.80px;top:890.91px;font-size:29.4px;color:#383838;--e:-0.214px;"><b>$</b><span class="s"> </span><b>1</b><b>9</b><b>3</b><span class="p">.</span><b>3</b><b>7</b></span>
<span class="t" id="r6_acc" style="left:1758.80px;top:890.91px;font-size:29.4px;color:#383838;--e:-0.043px;"><b>$</b><span class="s"> </span><b>1</b><b>9</b><b>3</b><span class="p">.</span><b>3</b><b>7</b></span>
<span class="t" id="r6_val" style="left:2076.00px;top:890.91px;font-size:29.4px;color:#383838;--e:-0.080px;"><b>$</b><span class="s"> </span><b>9</b><b>9</b><span class="p">,</span><b>8</b><b>0</b><b>6</b><span class="p">.</span><b>6</b><b>3</b></span>
<span class="t" id="r6_jv" style="left:2279.40px;top:890.91px;font-size:29.4px;color:#383838;--e:0.073px;"><span class="U">ACC</span><i>-</i><span class="U">JV</span><i>-</i><b>2</b><b>0</b><b>2</b><b>3</b><i>-</i><span class="p">...</span></span>
<span class="t" id="r6_cat" style="left:2559.80px;top:890.91px;font-size:29.4px;color:#383838;--e:-0.107px;"><span class="U">C</span><span class="l">omputer</span><span class="s"> </span><span class="U">E</span><span class="l">qu</span><span class="p">...</span></span>
<span class="t" id="r7_idx" style="left:145.40px;top:962.61px;font-size:29.4px;color:#383838;--e:0.000px;"><b>7</b></span>
<span class="t" id="r7_asset" style="left:205.20px;top:956.91px;font-size:29.4px;color:#383838;--e:-0.110px;"><span class="U">ACC</span><i>-</i><span class="U">ASS</span><i>-</i><b>2</b><b>0</b><span class="p">...</span></span>
<span class="t" id="r7_date" style="left:445.20px;top:956.91px;font-size:29.4px;color:#383838;--e:0.200px;"><b>0</b><b>1</b><i>-</i><b>0</b><b>3</b><i>-</i><b>2</b><b>0</b><b>2</b><b>3</b></span>
<span class="t" id="r7_purch" style="left:699.40px;top:956.91px;font-size:29.4px;color:#383838;--e:0.092px;"><b>$</b><span class="s"> </span><b>1</b><span class="p">,</span><b>0</b><b>0</b><span class="p">,</span><b>0</b><b>0</b><b>0</b><span class="p">.</span><b>0</b><b>0</b></span>
<span class="t" id="r7_open" style="left:1091.40px;top:956.91px;font-size:29.4px;color:#383838;--e:-0.060px;"><b>$</b><span class="s"> </span><b>0</b><span class="p">.</span><b>0</b><b>0</b></span>
<span class="t" id="r7_dep" style="left:1336.80px;top:956.91px;font-size:29.4px;color:#383838;--e:-0.214px;"><b>$</b><span class="s"> </span><b>1</b><b>9</b><b>3</b><span class="p">.</span><b>3</b><b>7</b></span>
<span class="t" id="r7_acc" style="left:1758.80px;top:956.91px;font-size:29.4px;color:#383838;--e:-0.043px;"><b>$</b><span class="s"> </span><b>1</b><b>9</b><b>3</b><span class="p">.</span><b>3</b><b>7</b></span>
<span class="t" id="r7_val" style="left:2076.00px;top:956.91px;font-size:29.4px;color:#383838;--e:-0.080px;"><b>$</b><span class="s"> </span><b>9</b><b>9</b><span class="p">,</span><b>8</b><b>0</b><b>6</b><span class="p">.</span><b>6</b><b>3</b></span>
<span class="t" id="r7_jv" style="left:2279.40px;top:956.91px;font-size:29.4px;color:#383838;--e:0.073px;"><span class="U">ACC</span><i>-</i><span class="U">JV</span><i>-</i><b>2</b><b>0</b><b>2</b><b>3</b><i>-</i><span class="p">...</span></span>
<span class="t" id="r7_cat" style="left:2559.80px;top:956.91px;font-size:29.4px;color:#383838;--e:-0.107px;"><span class="U">C</span><span class="l">omputer</span><span class="s"> </span><span class="U">E</span><span class="l">qu</span><span class="p">...</span></span>
<span class="t" id="r8_idx" style="left:145.40px;top:1028.61px;font-size:29.4px;color:#383838;--e:0.000px;"><b>8</b></span>
<span class="t" id="r8_asset" style="left:205.20px;top:1022.91px;font-size:29.4px;color:#383838;--e:-0.110px;"><span class="U">ACC</span><i>-</i><span class="U">ASS</span><i>-</i><b>2</b><b>0</b><span class="p">...</span></span>
<span class="t" id="r8_date" style="left:445.20px;top:1022.91px;font-size:29.4px;color:#383838;--e:0.200px;"><b>2</b><b>3</b><i>-</i><b>0</b><b>2</b><i>-</i><b>2</b><b>0</b><b>2</b><b>3</b></span>
<span class="t" id="r8_purch" style="left:745.80px;top:1022.91px;font-size:29.4px;color:#383838;--e:0.033px;"><b>$</b><span class="s"> </span><b>7</b><span class="p">,</span><b>0</b><b>0</b><b>0</b><span class="p">.</span><b>0</b><b>0</b></span>
<span class="t" id="r8_open" style="left:1091.40px;top:1022.91px;font-size:29.4px;color:#383838;--e:-0.060px;"><b>$</b><span class="s"> </span><b>0</b><span class="p">.</span><b>0</b><b>0</b></span>
<span class="t" id="r8_dep" style="left:1336.80px;top:1022.91px;font-size:29.4px;color:#383838;--e:-0.214px;"><b>$</b><span class="s"> </span><b>6</b><b>2</b><b>3</b><span class="p">.</span><b>9</b><b>1</b></span>
<span class="t" id="r8_acc" style="left:1758.80px;top:1022.91px;font-size:29.4px;color:#383838;--e:-0.043px;"><b>$</b><span class="s"> </span><b>6</b><b>2</b><b>3</b><span class="p">.</span><b>9</b><b>1</b></span>
<span class="t" id="r8_val" style="left:2093.60px;top:1022.91px;font-size:29.4px;color:#383838;--e:-0.067px;"><b>$</b><span class="s"> </span><b>6</b><span class="p">,</span><b>3</b><b>7</b><b>6</b><span class="p">.</span><b>0</b><b>9</b></span>
<span class="t" id="r8_jv" style="left:2279.40px;top:1022.91px;font-size:29.4px;color:#383838;--e:0.073px;"><span class="U">ACC</span><i>-</i><span class="U">JV</span><i>-</i><b>2</b><b>0</b><b>2</b><b>3</b><i>-</i><span class="p">...</span></span>
<span class="t" id="r8_cat" style="left:2559.80px;top:1022.91px;font-size:29.4px;color:#383838;--e:-0.107px;"><span class="U">C</span><span class="l">omputer</span><span class="s"> </span><span class="U">E</span><span class="l">qu</span><span class="p">...</span></span>
<span class="t" id="foot_l" style="left:123.80px;top:1088.94px;font-size:27.83px;color:#525252;--e:-0.368px;"><span class="U">F</span><span class="l">or</span><span class="s"> </span><span class="l">comparison</span><span class="p">,</span><span class="s"> </span><span class="l">use</span><span class="s"> </span><span class="p">&gt;</span><span class="l">5</span><span class="p">,</span><span class="s"> </span><span class="p">&lt;</span><span class="l">10</span><span class="s"> </span><span class="l">or</span><span class="s"> </span><span class="p">=</span><span class="l">324</span><span class="p">.</span><span class="s"> </span><span class="U">F</span><span class="l">or</span><span class="s"> </span><span class="l">ranges</span><span class="p">,</span><span class="s"> </span><span class="l">use</span><span class="s"> </span><span class="l">5</span><span class="p">:</span><span class="l">10</span><span class="s"> </span><span class="p">(</span><span class="l">for</span><span class="s"> </span><span class="l">values</span><span class="s"> </span><span class="l">between</span><span class="s"> </span><span class="l">5</span><span class="s"> </span><span class="p">&amp;</span><span class="s"> </span><span class="l">10</span><span class="p">).</span></span>
<span class="t" id="foot_r" style="left:2508.80px;top:1088.94px;font-size:27.83px;color:#525252;--e:-0.196px;"><span class="U">E</span><span class="l">xecution</span><span class="s"> </span><span class="U">T</span><span class="l">ime</span><span class="p">:</span><span class="s"> </span><span class="l">0</span><span class="p">.</span><span class="l">02739</span><span class="s"> </span><span class="l">sec</span></span>
</div>
<div class="b" style="left:580px;top:1590px;width:1760px;height:40px;border-radius:20px;box-shadow:0 0 70px 10px rgba(0,0,0,0.16);"></div>
</body></html>
